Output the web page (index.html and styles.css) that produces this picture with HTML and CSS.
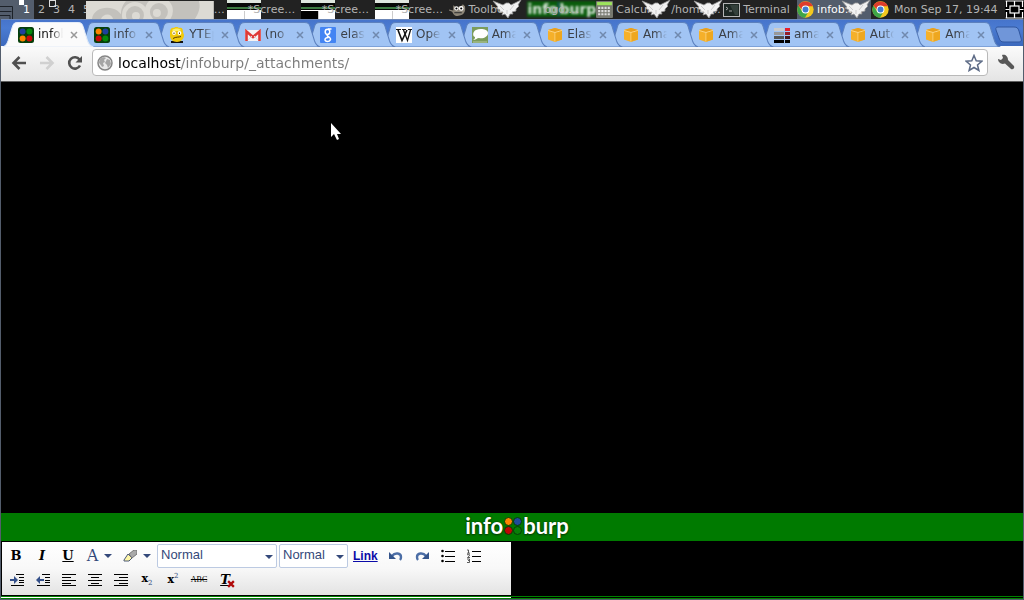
FILE: index.html
```
<!DOCTYPE html>
<html lang="en">
<head>
<meta charset="utf-8">
<title>infoburp</title>
<link rel="stylesheet" href="styles.css">
</head>
<body>
<svg class="defs" aria-hidden="true">
  <symbol id="close" viewBox="0 0 8 8"><path d="M1 1l6 6M7 1L1 7" stroke="currentColor" stroke-width="1.5"/></symbol>
  <symbol id="burp" viewBox="0 0 16 16"><rect width="16" height="16" rx="2.5" fill="#053f0a"/><circle cx="4.6" cy="4.6" r="3" fill="#ff8400"/><circle cx="11.4" cy="4.6" r="3" fill="#1f3f9c"/><circle cx="4.6" cy="11.4" r="3" fill="#cb0808"/><circle cx="11.4" cy="11.4" r="3" fill="#078a0b"/></symbol>
  <symbol id="burp-active" viewBox="0 0 16 16"><rect width="16" height="16" rx="2.5" fill="#053f0a"/><circle cx="4.6" cy="4.6" r="3" fill="#1f3f9c"/><circle cx="11.4" cy="4.6" r="3" fill="#078a0b"/><circle cx="4.6" cy="11.4" r="3" fill="#ff8400"/><circle cx="11.4" cy="11.4" r="3" fill="#cb0808"/></symbol>
  <symbol id="box" viewBox="0 0 16 16"><path d="M1 3l7-2 7 2v9.500l-7 2.500-7-2.500z" fill="#f5b02a"/><path d="M1 3l7 2 7-2-7-2z" fill="#e9a01e"/><path d="M1 3.500l7 2 7-2M8 5.500v9" stroke="#fbd383" fill="none"/><path d="M8.500 6L15 4v8.500l-6.500 2z" fill="#eea71f"/></symbol>
  <symbol id="chrome" viewBox="0 0 16 16"><circle cx="8" cy="8" r="7.700" fill="#f3c81e"/><path d="M1.300 4.200A7.700 7.700 0 0 1 15 5H8a3.500 3.500 0 0 0-3.400 3z" fill="#de3c2c"/><path d="M1.300 4.200A7.700 7.700 0 0 0 7.500 15.700L10.500 10.500 8 11.500 5 10z" fill="#3fa548"/><circle cx="8" cy="8" r="3.700" fill="#fff"/><circle cx="8" cy="8" r="2.800" fill="#3f7bd0"/></symbol>
  <symbol id="bird" viewBox="0 0 30 18"><path d="M1 1l10 4 3-2 3 0 2 2L29 0l-3 5 1 1-3 3 0 2-4 1 1 2-3 0-2 4-3-4-3 1 1-3-4 0 1-2-4-2 2-1z" fill="#f2f2f2" stroke="#999" stroke-width=".8"/><path d="M8 6l4 4M22 5l-4 5M15 10v4" stroke="#bbb" stroke-width=".7"/></symbol>
  <symbol id="shot" viewBox="0 0 34 19"><path fill="#060806" d="M0 0h34v10H0z"/><path fill="#dfe7df" d="M0 0h34v3H0z"/><path fill="#3c7a40" d="M0 7h34v2H0z"/><path fill="#fff" d="M0 10h34v9H0z"/><path stroke="#ccc" d="M17.500 11v8"/></symbol>
  <symbol id="tile" viewBox="0 0 18 19"><path d="M0 1h18M0 18h18M0 9.500h4M14 9.500h4M9 1v5M9 13v5M1 1v6M17 1v6M1 12v6M17 12v6" stroke="currentColor" stroke-width="1.200"/><rect x="4.500" y="6" width="9" height="7" fill="none" stroke="currentColor" stroke-width="1.200"/></symbol>
  <symbol id="shape" viewBox="0 0 90 25" preserveAspectRatio="none"><path d="M0 25c3-1 4-3 5-6L9 6c1-4 2-5.500 6-5.500h59c4 0 5 1.500 6 5.500l4 13c1 3 2 5 6 6z"/></symbol>
</svg>

<header class="panel">
  <nav class="tags" aria-label="Workspaces">
    <svg class="layout" viewBox="0 0 19 19" aria-hidden="true"><path d="M0 6.500h12.500V19M0 11.500h11.500M0 15.500h10V19" fill="none" stroke="#1d2229"/></svg>
    <a class="tag tag-on" href="#">1</a><a class="tag" href="#">2</a><a class="tag tag-used" href="#">3</a><a class="tag" href="#">4</a><a class="tag tag-cut" href="#">5</a>
  </nav>
  <div class="tasks">
    <a class="task task-wide" href="#"><svg class="thumb" viewBox="0 0 128 18" preserveAspectRatio="none"><path fill="#dcdad4" d="M0 0h128v18H0z"/><g fill="#c3c1bc"><path d="M40 0h73c2 6 0 12-4 18H36C34 12 35 6 40 0zM6 18c2-15 28-15 31 0z"/></g><g fill="#dcdad4"><circle cx="49" cy="14" r="13"/><circle cx="73" cy="10" r="14"/><path d="M15 18c2-6 11-6 12 0z"/></g><circle cx="49" cy="14" r="9" fill="#c3c1bc"/><circle cx="73" cy="11" r="9" fill="#c3c1bc"/><circle cx="50" cy="15" r="4" fill="#dcdad4"/><circle cx="71" cy="12" r="4" fill="#dcdad4"/></svg><span>…</span></a>
    <a class="task task-shot" href="#"><svg class="shot"><use href="#shot"/></svg><span>*Scree…</span></a>
    <a class="task task-shot" href="#"><svg class="shot"><use href="#shot"/><path d="M0 11h17v8H0z"/></svg><span>*Scree…</span></a>
    <a class="task task-shot" href="#"><svg class="shot"><use href="#shot"/></svg><span>*Scree…</span></a>
    <a class="task" href="#"><svg class="ico" viewBox="0 0 16 16"><path d="M0 8l4 1V4l3 2c3-1 5-1 6-3l2 2c1 5-1 9-7 9-3 0-4-2-5-4l-3-1z" fill="#8c8577"/><circle cx="7" cy="7" r="2" fill="#fff"/><circle cx="11.500" cy="7" r="2.200" fill="#fff"/><circle cx="7" cy="7" r="1"/><circle cx="11.500" cy="7" r="1"/><path d="M5 11h7" stroke="#333"/></svg><span>Toolbox</span><svg class="bird"><use href="#bird"/></svg></a>
    <a class="task task-logo" href="#"><span class="smear" aria-hidden="true">info<i></i>burp</span><span>ogo.…</span></a>
    <a class="task task-calc" href="#"><svg class="ico" viewBox="0 0 16 16"><rect width="16" height="16" rx="1" fill="#77796f"/><path d="M1 1h14v3H1z" fill="#9de35c"/><path d="M2 6.500h12M2 9.500h12M2 12.500h12" stroke="#ddd" stroke-width="2" stroke-dasharray="2 1"/></svg><span>Calcul</span><svg class="bird"><use href="#bird"/></svg></a>
    <a class="task task-home" href="#"><span>/home/…</span><svg class="bird"><use href="#bird"/></svg></a>
    <a class="task" href="#"><svg class="ico ico-term" viewBox="0 0 17 14"><rect x=".5" y=".5" width="16" height="13" fill="#1d2723" stroke="#b4b4b4"/><path d="M3 4l2 1.500L3 7M6 8h3" stroke="#aaa" fill="none"/><path d="M7 2l5 10h3V2z" fill="#34403b"/></svg><span>Terminal</span></a>
    <a class="task task-on" href="#"><svg class="ico"><use href="#chrome"/></svg><span>infob…..</span><svg class="bird"><use href="#bird"/></svg></a>
  </div>
  <svg class="ico tray"><use href="#chrome"/></svg>
  <time class="clock" datetime="19:44">Mon Sep 17, 19:44</time>
  <svg class="tile" aria-hidden="true"><use href="#tile"/></svg>
</header>

<main class="window">
  <div class="strip">
    <div class="tab tab-on"><svg class="shape"><use href="#shape"/></svg><svg class="fav"><use href="#burp-active"/></svg><a href="#">infoburp</a><button aria-label="Close tab"><svg><use href="#close"/></svg></button></div>
    <div class="tab"><svg class="shape"><use href="#shape"/></svg><svg class="fav"><use href="#burp"/></svg><a href="#">info</a><button aria-label="Close tab"><svg><use href="#close"/></svg></button></div>
    <div class="tab"><svg class="shape"><use href="#shape"/></svg><svg class="fav" viewBox="0 0 16 16"><path d="M2 14h12v2H2z" fill="#111"/><path d="M1 5c0-3 2-5 4-4 2-2 4-1 5 0 3-1 4 1 4 4l1 3c0 4-3 7-7 7s-7-3-7-6z" fill="#f0c90d"/><path d="M3 3c3-2 7-2 9 0l-2 1H4z" fill="#fdf06b"/><circle cx="5" cy="6" r="1.900" fill="#fff"/><circle cx="10.500" cy="6" r="1.900" fill="#fff"/><path d="M5 5.500v1.500M10.500 5.500V7M4 11.500c3-2 6-1 8-2" stroke="#5c3b00" fill="none"/></svg><a href="#">YTEp</a><button aria-label="Close tab"><svg><use href="#close"/></svg></button></div>
    <div class="tab"><svg class="shape"><use href="#shape"/></svg><svg class="fav" viewBox="0 0 16 16"><path d="M0 3h16v11H0z" fill="#f5f3f3"/><path d="M1.500 14V4.500L8 10l6.500-5.500V14" stroke="#df3a36" stroke-width="2.600" fill="none"/><path d="M3 13l4-4M13 13L9 9" stroke="#ddd"/></svg><a href="#">(no</a><button aria-label="Close tab"><svg><use href="#close"/></svg></button></div>
    <div class="tab"><svg class="shape"><use href="#shape"/></svg><svg class="fav" viewBox="0 0 16 16"><rect width="16" height="16" rx="1" fill="#4384f3"/><g fill="none" stroke="#fff" stroke-width="1.500"><ellipse cx="7.500" cy="4.800" rx="2.300" ry="2.600"/><path d="M8 2h3.500M9 7c-3 1-2 2 0 3 3 2 1 4.500-1.500 4.500-3.500 0-3.500-4 1-4"/></g></svg><a href="#">elast</a><button aria-label="Close tab"><svg><use href="#close"/></svg></button></div>
    <div class="tab"><svg class="shape"><use href="#shape"/></svg><svg class="fav" viewBox="0 0 16 16"><path d="M0 0h16v16H0z" fill="#fff"/><path d="M0 2.500h5M6 2.500h4M12 2.500h4" stroke="#111"/><path d="M2 3l4 10.500L11 3" fill="none" stroke="#111" stroke-width="1.600"/><path d="M7.500 3l4 10.500L14.500 3" fill="none" stroke="#111" stroke-width="1.300"/></svg><a href="#">Open</a><button aria-label="Close tab"><svg><use href="#close"/></svg></button></div>
    <div class="tab"><svg class="shape"><use href="#shape"/></svg><svg class="fav" viewBox="0 0 16 16"><path d="M0 0h16v16H0z" fill="#7b9c5c"/><path d="M4 3c4-2 12-1 12 3s-5 6-9 5c-2 0-3 2-6 2 2-1 2-2 2-3C0 9 1 4 4 3z" fill="#fff"/><path d="M1 15h14" stroke="#b6c99f"/></svg><a href="#">Amaz</a><button aria-label="Close tab"><svg><use href="#close"/></svg></button></div>
    <div class="tab"><svg class="shape"><use href="#shape"/></svg><svg class="fav"><use href="#box"/></svg><a href="#">Elast</a><button aria-label="Close tab"><svg><use href="#close"/></svg></button></div>
    <div class="tab"><svg class="shape"><use href="#shape"/></svg><svg class="fav"><use href="#box"/></svg><a href="#">Amaz</a><button aria-label="Close tab"><svg><use href="#close"/></svg></button></div>
    <div class="tab"><svg class="shape"><use href="#shape"/></svg><svg class="fav"><use href="#box"/></svg><a href="#">Amaz</a><button aria-label="Close tab"><svg><use href="#close"/></svg></button></div>
    <div class="tab"><svg class="shape"><use href="#shape"/></svg><svg class="fav" viewBox="0 0 16 16"><path d="M0 1h10v3H0z" fill="#ccc"/><path d="M0 5h10v3H0z" fill="#999"/><path d="M0 9h10v3H0z" fill="#555"/><path d="M0 13h10v3H0zM11 13h5v3h-5z"/><path d="M11 1h5v3h-5z" fill="#e8202b"/><path d="M11 5h5v3h-5z" fill="#96202a"/><path d="M11 9h5v3h-5z" fill="#441a20"/></svg><a href="#">amaz</a><button aria-label="Close tab"><svg><use href="#close"/></svg></button></div>
    <div class="tab"><svg class="shape"><use href="#shape"/></svg><svg class="fav"><use href="#box"/></svg><a href="#">Auto</a><button aria-label="Close tab"><svg><use href="#close"/></svg></button></div>
    <div class="tab"><svg class="shape"><use href="#shape"/></svg><svg class="fav"><use href="#box"/></svg><a href="#">Amaz</a><button aria-label="Close tab"><svg><use href="#close"/></svg></button></div>
    <button class="new" aria-label="New tab"><svg viewBox="0 0 27 17"><path d="M3 1h16c3 0 4 1 5 4l2 7c1 3 0 4-2 4H9c-3 0-4-1-5-4L1 4C.5 2 1 1 3 1z" fill="#7096d9" stroke="#30569f"/></svg></button>
  </div>

  <div class="bar">
    <button aria-label="Back"><svg viewBox="0 0 16 16"><path d="M8.500 2L2.500 8l6 6M3 8h12" fill="none" stroke="#505050" stroke-width="2.600"/></svg></button>
    <button aria-label="Forward"><svg viewBox="0 0 16 16"><path d="M7.500 2l6 6-6 6M13 8H1" fill="none" stroke="#d0d0d0" stroke-width="2.600"/></svg></button>
    <button aria-label="Reload"><svg viewBox="0 0 16 16"><path d="M13 10.500a5.700 5.700 0 1 1-.5-6" fill="none" stroke="#505050" stroke-width="2.600"/><path d="M15 1v6.500H8.500z" fill="#505050"/></svg></button>
    <div class="omni">
      <svg class="globe" viewBox="0 0 16 16"><circle cx="8" cy="8" r="7" fill="#e9e9e9" stroke="#858585" stroke-width="1.500"/><path d="M3 4c2-2 5-2 6-1L7 5l1 2-2 1 1 3-2 1c-1-3-3-3-3-5zM10 4l3 1 1 4-3 4-1-3-2-2 1-2z" fill="#a5a5a5"/></svg>
      <input type="text" aria-label="Address" value="localhost/infoburp/_attachments/">
      <button aria-label="Bookmark this page"><svg viewBox="0 0 18 18"><path d="M9 1.500l2.200 5.200 5.600.5-4.300 3.700 1.400 5.600L9 13.500l-4.900 3 1.400-5.600L1.200 7.200l5.600-.5z" fill="#fff" stroke="#5d6b86" stroke-width="1.500"/></svg></button>
    </div>
    <button aria-label="Settings"><svg viewBox="0 0 18 18"><path d="M1 5l3 1 2-2-1-3c3-1 6 1 6 5l6 6c1 2-1 4-3 3L8 9.500C4 11 1 8 1 5z" fill="#585858"/></svg></button>
  </div>

  <section class="page">
    <div class="stage"><svg class="pointer" viewBox="0 0 11 17"><path d="M1 0v14l3-3 3 6 2-1-2-5h4z" fill="#fff"/></svg></div>
    <div class="brand"><span>info</span><svg viewBox="0 0 18 18" aria-hidden="true"><g stroke="#063d08"><circle cx="4.500" cy="4.500" r="4" fill="#ff8400"/><circle cx="13.500" cy="4.500" r="4" fill="#204a9c"/><circle cx="4.500" cy="13.500" r="4" fill="#c00505"/><circle cx="13.500" cy="13.500" r="4" fill="#087f08"/></g></svg><span>burp</span></div>
    <div class="desk">
      <div class="editor">
        <div class="row">
          <button class="serif" aria-label="Bold"><b>B</b></button>
          <button class="serif" aria-label="Italic"><i>I</i></button>
          <button class="serif" aria-label="Underline"><u>U</u></button>
          <button class="drop ink" aria-label="Text color">A</button>
          <button class="drop" aria-label="Highlight color"><svg viewBox="0 0 14 12"><path d="M1 10l4-6 4 4-3 3H1z" fill="#fff7a8" stroke="#4a5877"/><path d="M6 4l5-4h3v4L9 8z" fill="#aaa" stroke="#777"/></svg></button>
          <label class="pick pick-font"><select aria-label="Font"><option>Normal</option></select></label>
          <label class="pick pick-size"><select aria-label="Size"><option>Normal</option></select></label>
          <a class="link" href="#">Link</a>
          <button aria-label="Undo"><svg viewBox="0 0 14 10"><path d="M3 5c3-4 9-3 9 1 0 1 0 2-1 3" fill="none" stroke="#4c6ea6" stroke-width="2.400"/><path d="M0 1v7h7z" fill="#35558c"/></svg></button>
          <button aria-label="Redo"><svg viewBox="0 0 14 10"><path d="M11 5C8 1 2 2 2 6c0 1 0 2 1 3" fill="none" stroke="#4c6ea6" stroke-width="2.400"/><path d="M14 1v7H7z" fill="#35558c"/></svg></button>
          <button aria-label="Bulleted list"><svg viewBox="0 0 14 14"><path d="M4 2.500h10M4 7.500h10M4 12.500h10" stroke="#000"/><circle cx="1.500" cy="2" r="1.300"/><circle cx="1.500" cy="7" r="1.300"/><circle cx="1.500" cy="12" r="1.300"/></svg></button>
          <button aria-label="Numbered list"><svg viewBox="0 0 14 14"><path d="M5 2.500h9M5 7.500h9M5 12.500h9" stroke="#000"/><path d="M0 1h1.500v3M0 4.200h3M0 5.700h2.500v1L.5 8.500H3M0 10h2.500v1.500H1M2.500 11.500v2H0" fill="none" stroke="#333" stroke-width=".8"/></svg></button>
        </div>
        <div class="row">
          <button aria-label="Indent"><svg viewBox="0 0 14 12"><path d="M6 .5h8M9 3.500h5M9 6.500h5M9 8.500h5M1 11.500h13" stroke="#000"/><path d="M0 5h4V2l4 4-4 4V7H0z" fill="#34508a"/></svg></button>
          <button aria-label="Outdent"><svg viewBox="0 0 14 12"><path d="M6 .5h8M9 3.500h5M9 6.500h5M9 8.500h5M1 11.500h13" stroke="#000"/><path d="M8 5H4V2L0 6l4 4V7h4z" fill="#34508a"/></svg></button>
          <button aria-label="Align left"><svg viewBox="0 0 14 12"><path d="M0 .5h14M0 3.500h9M0 6.500h14M0 9.500h9M0 11.500h14" stroke="#000"/></svg></button>
          <button aria-label="Align center"><svg viewBox="0 0 14 12"><path d="M0 .5h14M3 3.500h8M0 6.500h14M3 9.500h8M0 11.500h14" stroke="#000"/></svg></button>
          <button aria-label="Align right"><svg viewBox="0 0 14 12"><path d="M0 .5h14M5 3.500h9M0 6.500h14M5 9.500h9M0 11.500h14" stroke="#000"/></svg></button>
          <button class="script" aria-label="Subscript"><span>x<sub>2</sub></span></button>
          <button class="script" aria-label="Superscript"><span>x<sup>2</sup></span></button>
          <button class="strike" aria-label="Strikethrough">ABC</button>
          <button class="serif clear" aria-label="Remove formatting"><i>T</i><svg viewBox="0 0 7 7"><path d="M1 1l5 5M6 1L1 6" stroke="#b00a0a" stroke-width="2"/></svg></button>
        </div>
      </div>
    </div>
    <div class="foot"></div>
  </section>
</main>
</body>
</html>
```
FILE: styles.css
```
* { box-sizing: border-box; }

body {
  margin: 0;
  min-height: 100vh;
  display: flex;
  flex-direction: column;
  background: #535d6c;
  font-family: "DejaVu Sans", sans-serif;
}

a { color: inherit; text-decoration: none; }
svg { display: block; flex: none; }
.defs { position: absolute; width: 0; height: 0; }

button {
  display: flex;
  align-items: center;
  justify-content: center;
  flex: none;
  padding: 0;
  border: 0;
  background: none;
  color: inherit;
  font: inherit;
}

/* Desktop panel */
.panel {
  display: flex;
  align-items: center;
  height: 19px;
  overflow: hidden;
  background: #222;
  color: #b4b4b4;
  font-size: 11px;
  line-height: 19px;
}
.tags { display: flex; flex: none; width: 86px; height: 19px; overflow: hidden; }
.layout { width: 19px; height: 19px; background: #535d6c; }
.tag { flex: none; width: 15px; text-align: center; }
.tag-on {
  color: #fff;
  background: linear-gradient(#fff, #fff) 0 0 / 5px 5px no-repeat #535d6c;
}
.tag-used { position: relative; }
.tag-used::before {
  content: "";
  position: absolute;
  left: 0;
  top: 0;
  width: 5px;
  height: 5px;
  border: 1px solid #ddd;
}
.tag-cut { text-align: left; padding-left: 4px; }

.tasks { display: flex; flex: 1; min-width: 0; height: 19px; }
.task {
  position: relative;
  display: flex;
  align-items: center;
  flex: 74 1 0;
  min-width: 0;
  gap: 3px;
  white-space: nowrap;
}
.task-wide { flex-grow: 141; gap: 0; }
.task-calc { flex-grow: 75; }
.task-home { flex-grow: 52; }
.task-on { background: #535d6c; color: #fff; }
.thumb { flex: 1; min-width: 0; height: 18px; }
.task-wide span { width: 13px; }
.shot { width: 34px; height: 19px; margin-right: -16px; }
.task-shot span { position: relative; }
.ico { width: 17px; height: 17px; }
.ico-term { height: 14px; }
.bird { position: absolute; right: 0; top: 0; width: 30px; height: 18px; }
.task-logo span { position: relative; margin-left: 22px; }
.task-logo .smear {
  position: absolute;
  left: 5px;
  right: 0;
  top: 1px;
  display: flex;
  align-items: center;
  margin: 0;
  background: #0a5c0c;
  color: #d8e6d8;
  font-size: 14px;
  font-weight: bold;
  line-height: 16px;
  overflow: hidden;
  filter: blur(1px);
}
.smear i {
  flex: 1;
  height: 14px;
  background: linear-gradient(90deg, #d84208 50%, #204a9c 50%);
}
.tray { margin: 0 5px 0 1px; }
.clock { flex: none; width: 111px; }
.tile { width: 19px; height: 19px; color: #fff; background: #000; }

/* Browser window */
.window {
  display: flex;
  flex: 1;
  flex-direction: column;
  margin: 0 1px 1px;
}
.strip {
  display: flex;
  height: 27px;
  padding: 3px 0 0 2px;
  background: linear-gradient(#4674cb, #4a7bd2 8px, #3c69bd);
  border-top: 1px solid #6c87b8;
}
.tab {
  position: relative;
  display: flex;
  align-items: center;
  flex: 1 1 0;
  min-width: 0;
  height: 23px;
  padding-left: 15px;
  color: #3c4047;
  font-size: 12px;
}
.shape {
  position: absolute;
  left: 0;
  top: -1px;
  width: calc(100% + 15px);
  height: 25px;
  fill: #a1c4f4;
  stroke: #5c80bd;
}
.tab-on .shape { fill: #fbfbfb; stroke: #e4ecf8; }
.tab:nth-child(1) { z-index: 13; color: #111; }
.tab:nth-child(2) { z-index: 12; }
.tab:nth-child(3) { z-index: 11; }
.tab:nth-child(4) { z-index: 10; }
.tab:nth-child(5) { z-index: 9; }
.tab:nth-child(6) { z-index: 8; }
.tab:nth-child(7) { z-index: 7; }
.tab:nth-child(8) { z-index: 6; }
.tab:nth-child(9) { z-index: 5; }
.tab:nth-child(10) { z-index: 4; }
.tab:nth-child(11) { z-index: 3; }
.tab:nth-child(12) { z-index: 2; }
.tab:nth-child(13) { z-index: 1; }
.fav { position: relative; width: 16px; height: 16px; }
.tab a {
  position: relative;
  flex: 1;
  min-width: 0;
  margin: 0 7px 0 4px;
  padding-bottom: 2px;
  overflow: hidden;
  white-space: nowrap;
  -webkit-mask-image: linear-gradient(90deg, #000 50%, transparent);
  mask-image: linear-gradient(90deg, #000 50%, transparent);
}
.tab button { position: relative; width: 8px; margin-right: 1px; color: #7089ae; }
.tab-on button { color: #999; }
.tab button svg { width: 8px; height: 8px; }
.new { align-items: flex-start; width: 37px; padding: 3px 0 0 9px; }
.new svg { width: 27px; height: 17px; }

.bar {
  display: flex;
  align-items: center;
  height: 36px;
  padding: 0 9px 2px;
  background: linear-gradient(#fbfbfb, #e4e4e4);
  border-bottom: 1px solid #5f5f5f;
}
.bar > button { width: 17px; margin-right: 11px; }
.bar > button svg { width: 16px; height: 16px; }
.bar > button:nth-of-type(3) { margin-right: 9px; }
.bar > .omni + button { margin: 0 0 0 9px; }
.bar > .omni + button svg { width: 18px; height: 18px; }
.omni {
  display: flex;
  align-items: center;
  flex: 1;
  min-width: 0;
  height: 27px;
  padding: 0 4px;
  gap: 5px;
  background: #fff;
  border: 1px solid #b9b9b9;
  border-radius: 4px;
}
.globe { width: 16px; height: 16px; }
.omni input {
  flex: 1;
  min-width: 0;
  padding: 0;
  border: 0;
  outline: 0;
  font: 14px/20px "DejaVu Sans", sans-serif;
  color: transparent;
  background: linear-gradient(90deg, #000 63px, #7c7c7c 63px);
  -webkit-background-clip: text;
  background-clip: text;
}
.omni button svg { width: 18px; height: 18px; }

/* Page */
.page {
  display: flex;
  flex: 1;
  flex-direction: column;
  background: #000;
}
.stage { position: relative; flex: 1; }
.pointer { position: absolute; left: 329px; top: 41px; width: 11px; height: 17px; }
.brand {
  display: flex;
  align-items: center;
  justify-content: center;
  gap: 1px;
  height: 28px;
  padding: 0 0 2px 10px;
  background: #007a00;
  color: #fff;
  font: bold 22px/26px Lato, sans-serif;
  text-shadow: 0 0 2px #033c03, 0 1px 2px #033c03;
}
.brand svg { width: 18px; height: 18px; }
.desk { display: flex; padding: 1px 0 1px 1px; }
.editor {
  width: 509px;
  padding: 2px 1px 3px;
  background: linear-gradient(#fff, #f8f8f8 50%, #e3e3e3);
  font-family: "Liberation Sans", sans-serif;
}
.row { display: flex; align-items: center; height: 24px; }
.row + .row { padding-left: 1px; }
.row > button { width: 26px; height: 24px; color: #000; }
.row button svg { width: 14px; }
.row .serif { font: bold 13px/20px "DejaVu Serif", "Liberation Serif", serif; }
.row .drop { width: 37px; gap: 6px; }
.row .drop::after, .pick::after {
  content: "";
  border: 4px solid transparent;
  border-top-color: #34497a;
  border-bottom: 0;
}
.row .ink { color: #34497a; font: 16px/20px "DejaVu Serif", serif; }
.pick {
  position: relative;
  flex: none;
  height: 24px;
  margin-left: 2px;
  background: #fff;
  border: 1px solid #bccae2;
  border-radius: 2px;
}
.pick::after { position: absolute; right: 3px; top: 10px; }
.pick-font { width: 120px; }
.pick-size { width: 69px; }
.pick select {
  width: 100%;
  height: 20px;
  padding: 0 3px;
  border: 0;
  outline: 0;
  appearance: none;
  background: none;
  color: #34497a;
  font: 13px/20px "Liberation Sans", sans-serif;
}
.link {
  margin: 0 5px;
  color: #0b0ba8;
  font-size: 12px;
  font-weight: bold;
  text-decoration: underline;
}
.row .script { font: bold 11px/14px "DejaVu Serif", serif; }
.script sub, .script sup { color: #34497a; font-size: 7px; font-weight: normal; line-height: 7px; }
.row .strike { font: 8px/12px "Liberation Serif", serif; text-decoration: line-through; }
.row .clear { position: relative; text-decoration: underline; }
.row .clear svg { position: absolute; right: 3px; bottom: 4px; width: 8px; height: 8px; }
.foot {
  height: 3px;
  border: solid #008000;
  border-width: 1px 0;
  background: linear-gradient(90deg, #fff 510px, #000 510px);
}
```
